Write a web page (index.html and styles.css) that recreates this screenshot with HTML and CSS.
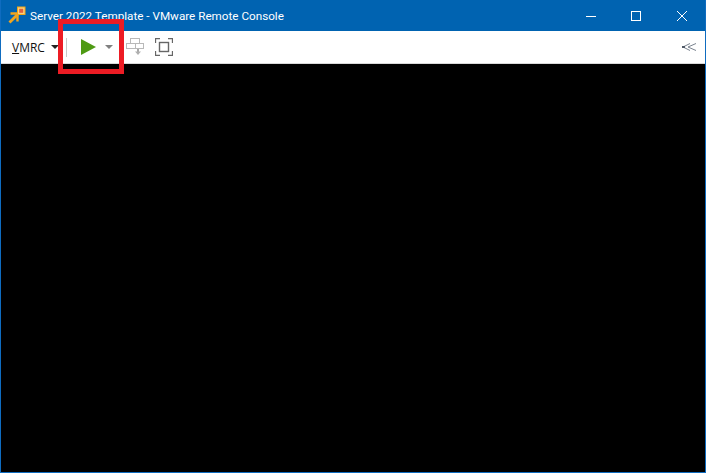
FILE: index.html
```html
<!DOCTYPE html>
<html lang="en">
<head>
<meta charset="utf-8">
<title>Server 2022 Template - VMware Remote Console</title>
<link rel="stylesheet" href="styles.css">
</head>
<body>
<div class="window">
  <header class="titlebar">
    <svg class="app-icon" width="18" height="18" viewBox="0 0 18 18">
      <path d="M1.5 16.5L9.5 8.5" fill="none" stroke="#f3a51d" stroke-width="2.8"/>
      <path d="M2.5 7.5H9.5V15.5" fill="none" stroke="#f3a51d" stroke-width="2.4"/>
      <rect x="9.5" y="1" width="7.5" height="7.5" fill="#fbd27a" stroke="#efa51a"/>
      <rect x="11.2" y="2.8" width="4" height="4" fill="#e0603c"/>
    </svg>
    <span class="title">Server 2022 Template - VMware Remote Console</span>
    <div class="controls">
      <span class="ctl"><svg width="12" height="12" viewBox="0 0 12 12"><path d="M2 6.5H12" stroke="#fff"/></svg></span>
      <span class="ctl"><svg width="12" height="12" viewBox="0 0 12 12"><rect x="1.5" y="1.5" width="9" height="9" fill="none" stroke="#fff"/></svg></span>
      <span class="ctl"><svg width="12" height="12" viewBox="0 0 12 12"><path d="M1 1L11 11M11 1L1 11" stroke="#fff" fill="none"/></svg></span>
    </div>
  </header>
  <nav class="toolbar">
    <span class="menu"><u>V</u>MRC</span>
    <span class="caret dark"></span>
    <span class="sep"></span>
    <svg class="play" width="15" height="16" viewBox="0 0 15 16"><path d="M0 0L15 8L0 16Z" fill="#4e9a13"/></svg>
    <span class="caret grey"></span>
    <svg class="send" width="18" height="18" viewBox="0 0 18 18" fill="none" stroke="#b9b9b9">
      <rect x="4.5" y="0.5" width="9" height="5"/>
      <rect x="0.5" y="5.5" width="9" height="5"/>
      <rect x="9.5" y="5.5" width="8" height="5"/>
      <path d="M12 11V14" stroke="#a8a8a8" stroke-width="2"/>
      <path d="M9 13.5H15L12 17Z" fill="#b0b0b0" stroke="none"/>
    </svg>
    <svg class="full" width="18" height="18" viewBox="0 0 18 18" fill="none" stroke="#666">
      <path d="M0.5 5V0.5H5M13 0.5H17.5V5M17.5 13V17.5H13M5 17.5H0.5V13" stroke-width="1.3"/>
      <rect x="4.5" y="4.5" width="9" height="9" stroke-width="1.4"/>
    </svg>
    <svg class="collapse" width="14" height="8" viewBox="0 0 14 8" fill="none" stroke="#7a838f">
      <path d="M8 0.5L1 4L8 7.5M14 0.5L6 4L14 7.5"/>
      <rect x="0" y="3" width="3" height="2" fill="#4f5966" stroke="none"/>
    </svg>
  </nav>
  <main class="screen"></main>
  <div class="highlight"></div>
</div>
</body>
</html>
```
FILE: styles.css
```css
html, body {
  margin: 0;
  padding: 0;
  background: #000;
}
.window {
  position: relative;
  box-sizing: border-box;
  width: 706px;
  height: 473px;
  display: flex;
  flex-direction: column;
  border: 1px solid #0f6cc0;
  border-top: 0;
  overflow: hidden;
  font-family: "Open Sans", "Noto Sans", sans-serif;
}
.titlebar {
  height: 31px;
  flex: none;
  display: flex;
  align-items: center;
  background: #0063b1;
  color: #fff;
  padding-left: 7px;
}
.app-icon {
  flex: none;
  margin-top: -1px;
}
.title {
  margin-left: 4px;
  font-family: Roboto, "Open Sans", sans-serif;
  font-size: 11.7px;
  line-height: 16px;
}
.controls {
  margin-left: auto;
  display: flex;
}
.ctl {
  width: 46px;
  height: 31px;
  display: flex;
  align-items: center;
  justify-content: center;
}
.toolbar {
  height: 32px;
  flex: none;
  display: flex;
  align-items: center;
  background: #fff;
  border-bottom: 1px solid #d9d9d9;
  padding-left: 11px;
  padding-right: 9px;
}
.menu {
  flex: none;
  width: 34px;
  font-size: 12px;
  color: #111;
}
.caret {
  flex: none;
  width: 0;
  height: 0;
  border-left: 4px solid transparent;
  border-right: 4px solid transparent;
  border-top: 4px solid #222;
}
.caret.dark {
  margin-left: 5px;
}
.caret.grey {
  margin-left: 9px;
  border-top-color: #808080;
}
.sep {
  flex: none;
  width: 1px;
  height: 19px;
  background: #c8c8c8;
  margin-left: 7px;
  margin-right: 14px;
}
.play {
  flex: none;
}
.send {
  flex: none;
  margin-left: 13px;
}
.full {
  flex: none;
  margin-left: 11px;
}
.collapse {
  flex: none;
  margin-left: auto;
}
.screen {
  flex: 1;
  background: #000;
}
.highlight {
  position: absolute;
  left: 57px;
  top: 19px;
  width: 66px;
  height: 55px;
  box-sizing: border-box;
  border: 5px solid #ed1c24;
}
```
